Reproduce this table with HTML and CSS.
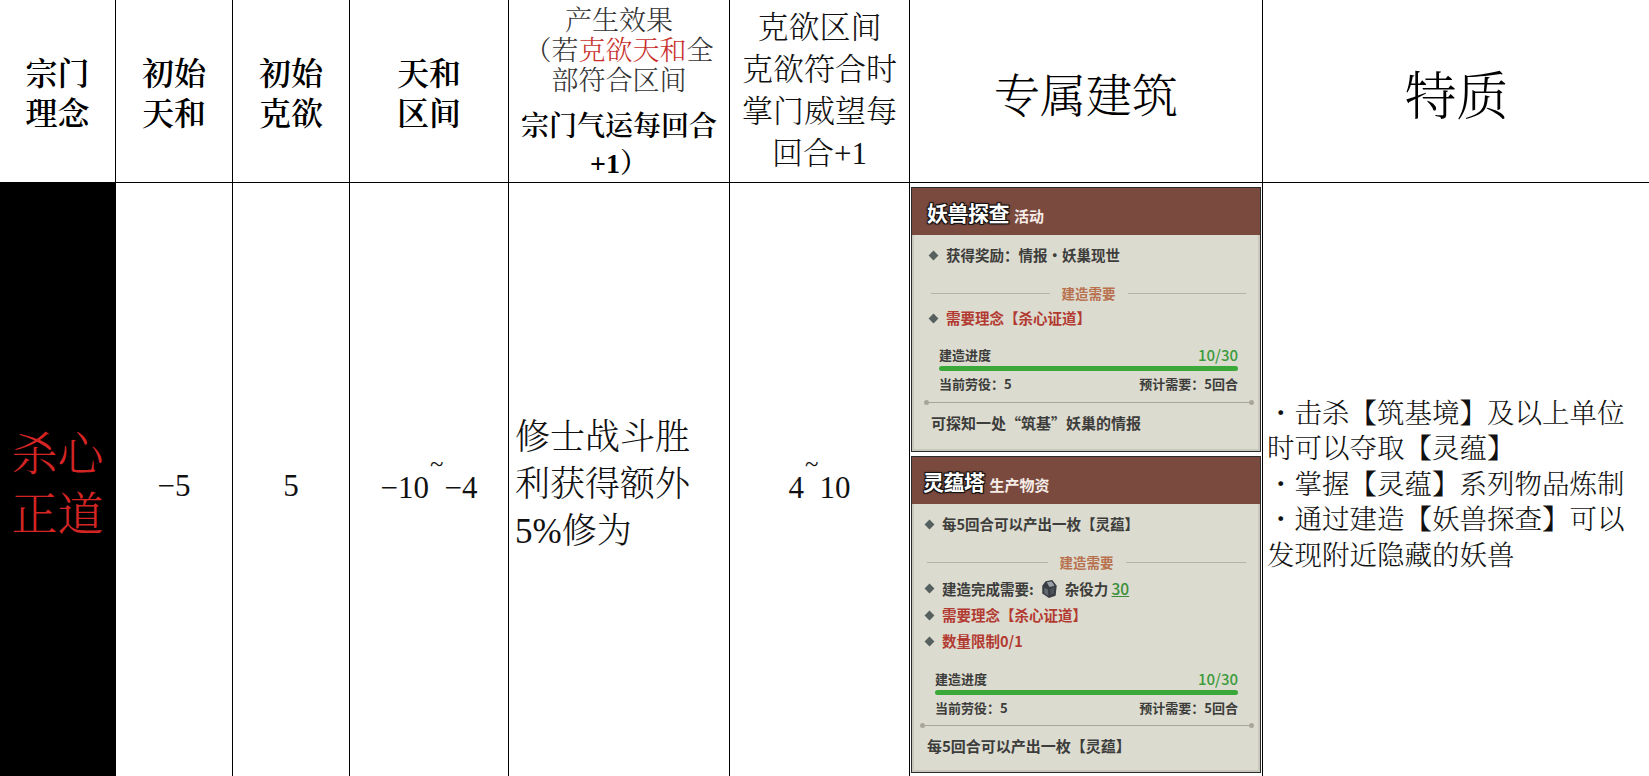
FILE: index.html
```html
<!DOCTYPE html>
<html lang="zh-CN">
<head>
<meta charset="utf-8">
<title>宗门理念</title>
<link rel="stylesheet" href="styles.css">
</head>
<body>
<div class="sheet">
  <div class="cell hd"><div>宗门<br>理念</div></div>
  <div class="cell hd"><div>初始<br>天和</div></div>
  <div class="cell hd"><div>初始<br>克欲</div></div>
  <div class="cell hd"><div>天和<br>区间</div></div>
  <div class="cell hd-effect"><div>产生效果<br>（若<span class="red">克欲天和</span>全<br>部符合区间<div class="strong">宗门气运每回合<br>+1）</div></div></div>
  <div class="cell hd-range"><div>克欲区间<br>克欲符合时<br>掌门威望每<br>回合+1</div></div>
  <div class="cell hd-big"><div>专属建筑</div></div>
  <div class="cell hd-huge"><div>特质</div></div>

  <div class="cell name"><div>杀心<br>正道</div></div>
  <div class="cell num"><div>−5</div></div>
  <div class="cell num"><div>5</div></div>
  <div class="cell num"><div>−10<span class="tilde">~</span>−4</div></div>
  <div class="cell effect"><div>修士战斗胜<br>利获得额外<br>5%修为</div></div>
  <div class="cell num"><div>4<span class="tilde">~</span>10</div></div>
  <div class="cell builds">
    <div class="card card-a">
      <div class="card-head"><span class="card-title">妖兽探查</span><span class="card-tag">活动</span></div>
      <div class="card-body">
        <div class="item first"><span>获得奖励：情报·妖巢现世</span></div>
        <div class="section">建造需要</div>
        <div class="item req tight"><span>需要理念【杀心证道】</span></div>
        <div class="progress">
          <div class="prog-row"><span>建造进度</span><span class="val">10/30</span></div>
          <div class="bar"></div>
          <div class="prog-row"><span>当前劳役：5</span><span>预计需要：5回合</span></div>
        </div>
        <div class="rule"></div>
        <div class="foot">可探知一处“筑基”妖巢的情报</div>
      </div>
    </div>
    <div class="card card-b">
      <div class="card-head"><span class="card-title">灵蕴塔</span><span class="card-tag">生产物资</span></div>
      <div class="card-body">
        <div class="item first"><span>每5回合可以产出一枚【灵蕴】</span></div>
        <div class="section">建造需要</div>
        <div class="item"><span>建造完成需要:</span><svg class="icon" width="19" height="20" viewBox="0 0 17 18"><path d="M5 2 L11 1 L15 6 L14 15 L8 17 L2 13 L2 6 Z" fill="#3a3e44"/><path d="M6 3 L10.5 2.2 L13 6 L8.5 7.2 Z" fill="#9aa0a7"/><path d="M3.5 8 L7 9 L7.5 15 L4 13 Z" fill="#62686f"/><path d="M9 9 L13 7.5 L12.5 13 L9.5 14.5 Z" fill="#4c5158"/></svg><span>杂役力 <span class="num-link">30</span></span></div>
        <div class="item req"><span>需要理念【杀心证道】</span></div>
        <div class="item req"><span>数量限制0/1</span></div>
        <div class="progress loose">
          <div class="prog-row"><span>建造进度</span><span class="val">10/30</span></div>
          <div class="bar"></div>
          <div class="prog-row"><span>当前劳役：5</span><span>预计需要：5回合</span></div>
        </div>
        <div class="rule short"></div>
        <div class="foot">每5回合可以产出一枚【灵蕴】</div>
      </div>
    </div>
  </div>
  <div class="cell traits"><div>・击杀【筑基境】及以上单位<br>时可以夺取【灵蕴】<br>・掌握【灵蕴】系列物品炼制<br>・通过建造【妖兽探查】可以<br>发现附近隐藏的妖兽</div></div>
</div>
</body>
</html>
```

FILE: styles.css
```css
* { box-sizing: border-box; }
html, body { margin: 0; padding: 0; background: #fff; }
body {
  width: 1649px;
  height: 776px;
  overflow: hidden;
  font-family: "Liberation Serif", "Noto Serif CJK SC", "Noto Sans CJK SC", serif;
  color: #000;
}
.sheet {
  display: grid;
  grid-template-columns: 115px 116px 116px 158px 220px 179px 352px 387px;
  grid-template-rows: 182px 603px;
  gap: 1px;
  background: #000;
  width: 1650px;
}
.cell {
  background: #fff;
  display: flex;
  align-items: center;
  justify-content: center;
  text-align: center;
}
.hd { font-size: 32px; line-height: 40px; font-weight: 600; padding-top: 6px; }
.hd-effect { font-size: 27px; line-height: 30px; color: #333; font-weight: 300; padding-top: 6px; }
.hd-effect .strong { font-weight: 600; color: #000; margin-top: 12px; line-height: 37px; font-size: 28px; }
.red { color: #c8302c; }
.hd-range { font-size: 31px; line-height: 42px; color: #111; font-weight: 300; }
.hd-big { font-size: 46px; font-weight: 300; padding-top: 2px; }
.hd-huge { font-size: 52px; font-weight: 300; padding-top: 2px; }

.name { background: #000; color: #d42424; font-size: 46px; line-height: 60px; font-weight: 300; }
.num { font-size: 31px; color: #111; padding-top: 2px; }
.tilde { vertical-align: 1.05em; font-size: 0.8em; line-height: 0; margin: 0 1px; }
.effect {
  justify-content: flex-start;
  text-align: left;
  padding-left: 6px;
  font-size: 35px;
  line-height: 47px;
  color: #111;
  font-weight: 300;
}
.traits {
  justify-content: flex-start;
  text-align: left;
  padding-left: 4px;
  font-size: 27.5px;
  line-height: 35.5px;
  color: #111;
  font-weight: 300;
}

.builds {
  display: flex;
  flex-direction: column;
  align-items: stretch;
  justify-content: flex-start;
  padding: 4px 1px 0 1px;
  gap: 4px;
  text-align: left;
}
.card {
  border: 1px solid #2b2b2b;
  background: #dcdbd0;
  font-family: "Noto Sans CJK SC", sans-serif;
  box-shadow: inset 0 0 0 2px #c9c8bc;
  text-align: left;
}
.card-head {
  height: 47px;
  background: #7a4a3e;
  display: flex;
  align-items: center;
  gap: 5px;
  padding-left: 15px;
}
.card-b .card-head { padding-left: 11px; }
.card-title {
  color: #fff;
  font-size: 21px;
  font-weight: 700;
  letter-spacing: -0.5px;
  text-shadow: 1px 1px 0 #111, -1px -1px 0 #111, 1px -1px 0 #111, -1px 1px 0 #111, 0 0 3px #000;
}
.card-tag { color: #f6ece8; font-size: 15px; font-weight: 700; margin-top: 7px; }
.card-body { padding: 0 14px 18px 17px; }
.card-b .card-body { padding: 0 14px 16px 13px; }
.item {
  display: flex;
  align-items: center;
  gap: 8px;
  margin-top: 6px;
  font-size: 14.5px;
  line-height: 20px;
  font-weight: 700;
  color: #3d3d3b;
}
.item::before {
  content: "";
  flex: none;
  width: 7px;
  height: 7px;
  margin: 0 1px;
  background: #56605f;
  transform: rotate(45deg);
}
.item.first { margin-top: 10px; }
.item.tight { margin-top: 5px; }
.item.req { color: #b23a30; }
.icon { flex: none; margin: 0 -2px; }
.num-link { color: #3b8f3b; text-decoration: underline; font-weight: 500; font-size: 15.5px; }
.section {
  display: flex;
  align-items: center;
  gap: 12px;
  margin: 18px 0 0 2px;
  font-size: 13.5px;
  line-height: 20px;
  font-weight: 700;
  color: #b8714e;
}
.section::before, .section::after { content: ""; flex: 1; height: 1px; background: #b6b3a8; }
.progress { margin: 18px 8px 0 10px; }
.progress.loose { margin-top: 19px; }
.prog-row {
  display: flex;
  justify-content: space-between;
  align-items: center;
  font-size: 13px;
  line-height: 18px;
  font-weight: 700;
  color: #3d3d3b;
}
.prog-row .val { color: #3b9a3b; font-size: 15px; font-weight: 500; }
.bar { height: 5px; margin: 2px 0 4px; background: #3aa93a; border-radius: 3px; }
.rule { margin: 9px -6px 0 -3px; height: 1px; background: #a8a69a; position: relative; }
.rule.short { margin-top: 8px; }
.rule::before, .rule::after {
  content: "";
  position: absolute;
  top: -2px;
  width: 5px;
  height: 5px;
  border-radius: 50%;
  background: #a8a69a;
}
.rule::before { left: -2px; }
.rule::after { right: -2px; }
.foot {
  margin: 10px 0 0 2px;
  font-size: 15px;
  line-height: 20px;
  font-weight: 700;
  color: #3d3d3b;
}
```
